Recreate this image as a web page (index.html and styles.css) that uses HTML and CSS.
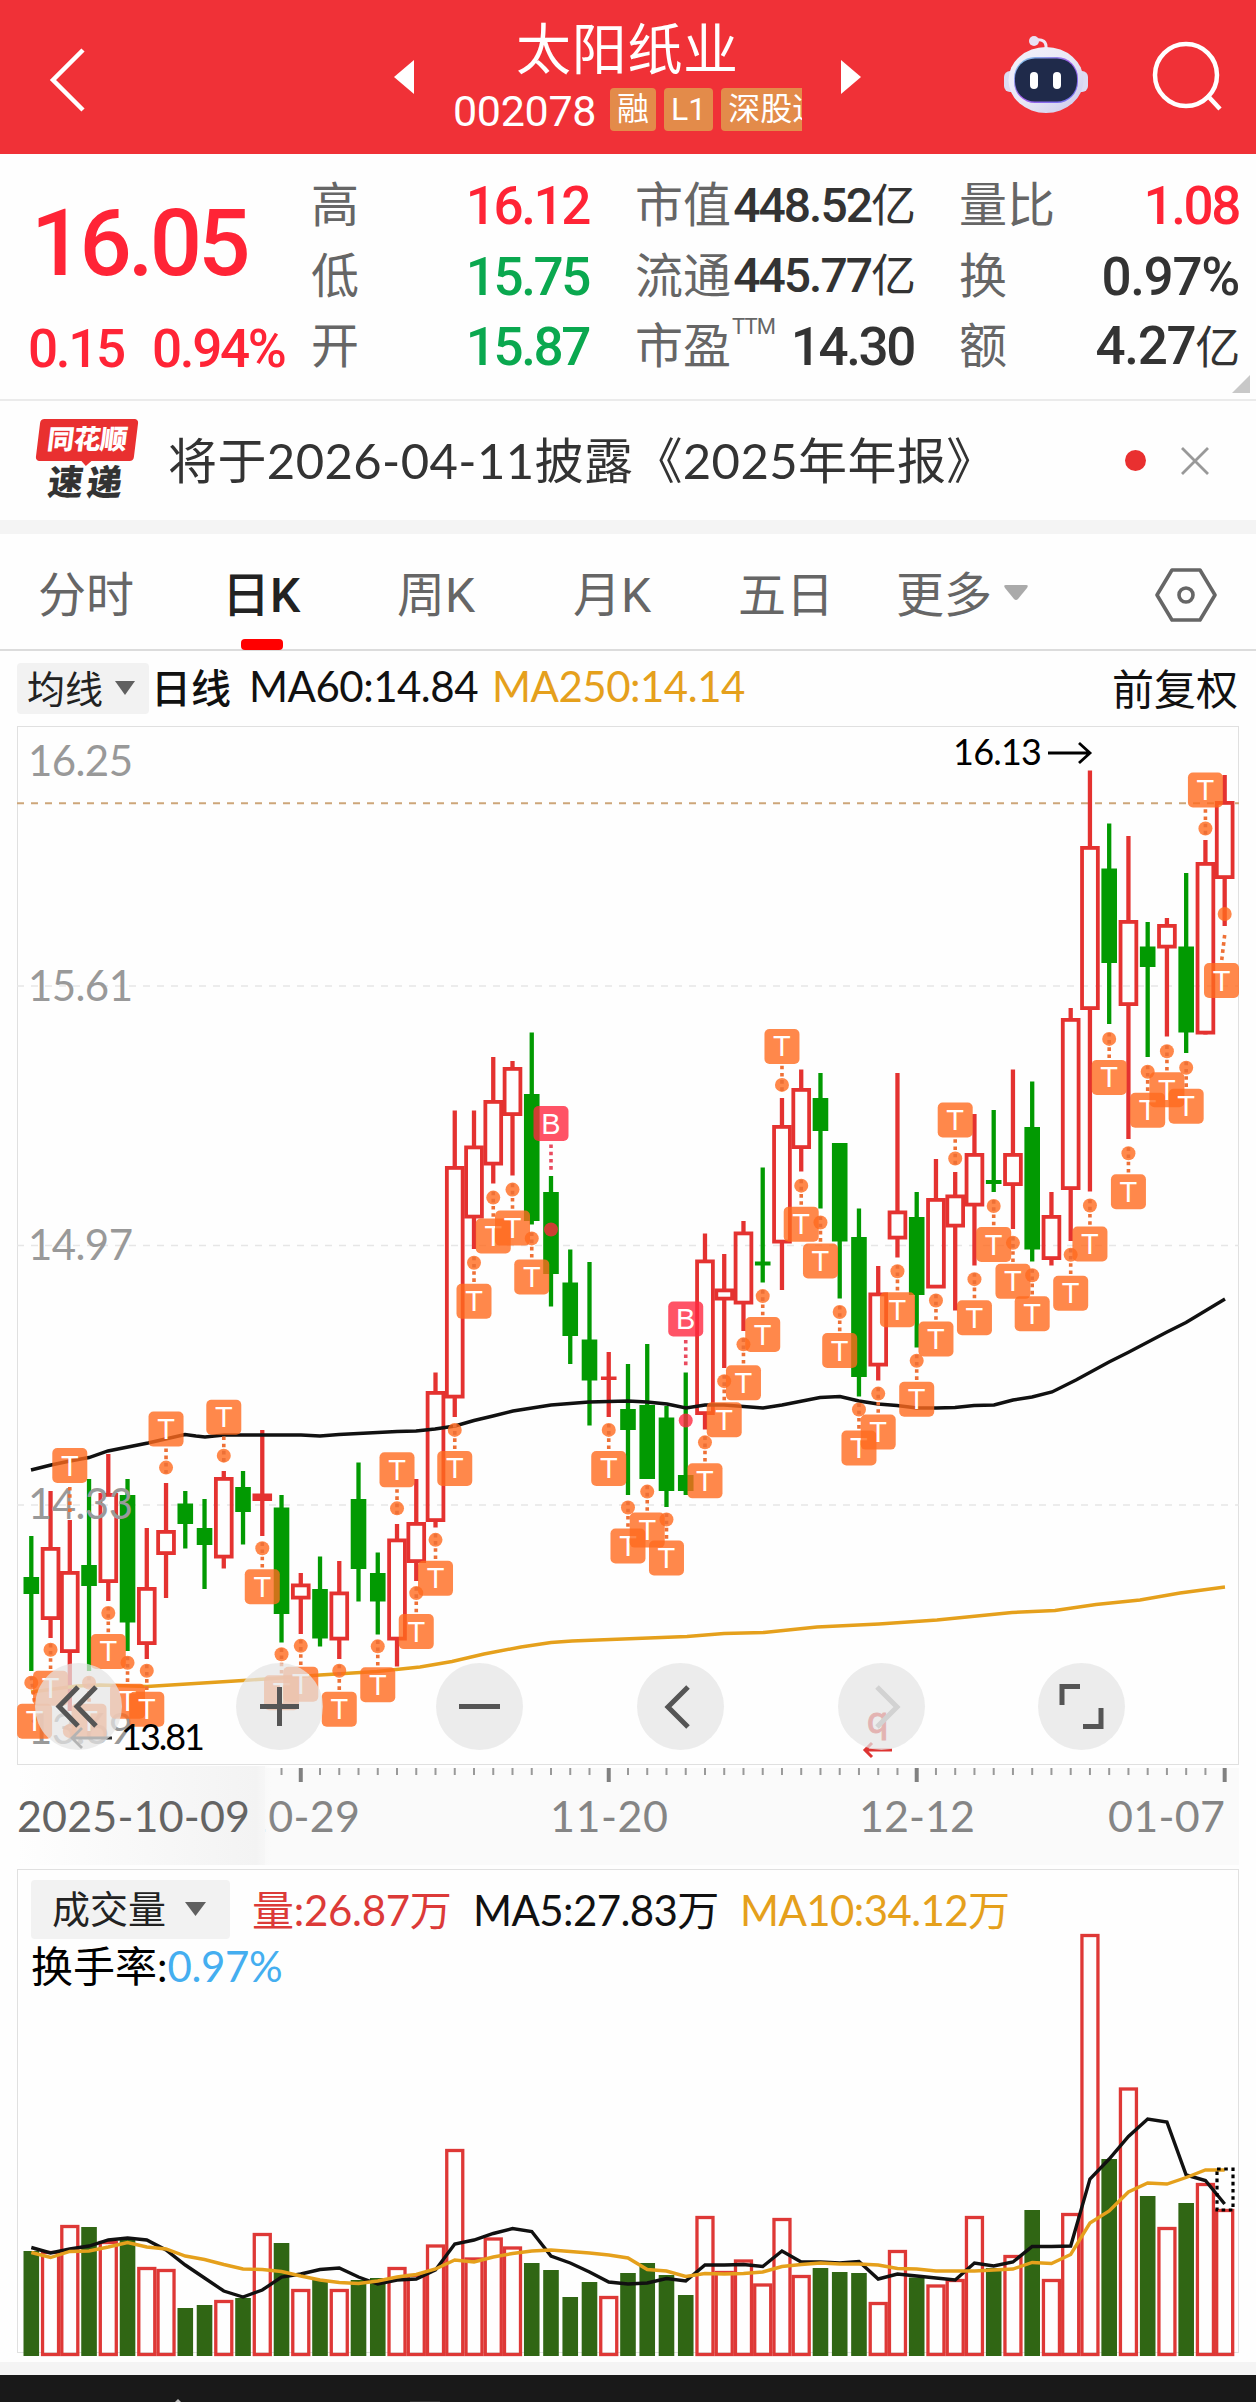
FILE: index.html
```html
<!DOCTYPE html>
<html lang="zh-CN">
<head>
    <meta charset="UTF-8">
    <meta name="viewport" content="width=device-width, initial-scale=1.0">
    <title>太阳纸业 002078</title>
    <link rel="stylesheet" href="styles.css">
</head>
<body>

    <header class="header">
        <svg class="back" width="40" height="68" viewBox="0 0 40 68"><path d="M35 4L5 34L35 64" fill="none" stroke="#fff" stroke-width="4.5"/></svg>
        <div class="stock">
            <svg width="20" height="34" viewBox="0 0 20 34"><path d="M20 0V34L0 17Z" fill="#fff"/></svg>
            <div class="stock-name">
                <h1>太阳纸业</h1>
                <div class="stock-code">
                    <span class="code">002078</span>
                    <span class="tag">融</span>
                    <span class="tag">L1</span>
                    <span class="tag tag-cut">深股通</span>
                </div>
            </div>
            <svg width="20" height="34" viewBox="0 0 20 34"><path d="M0 0V34L20 17Z" fill="#fff"/></svg>
        </div>
        <svg class="robot" width="86" height="80" viewBox="0 0 86 80">
            <defs>
                <linearGradient id="head" x1="0" y1="0" x2="1" y2="1">
                    <stop offset="0" stop-color="#f4f2fb"/>
                    <stop offset="0.5" stop-color="#e9e8f5"/>
                    <stop offset="1" stop-color="#c9c7ec"/>
                </linearGradient>
                <linearGradient id="rim" x1="0" y1="0" x2="1" y2="1">
                    <stop offset="0" stop-color="#7fd6ea"/>
                    <stop offset="0.5" stop-color="#a05be8"/>
                    <stop offset="1" stop-color="#6a78f0"/>
                </linearGradient>
            </defs>
            <path d="M32 5Q44 3 43 14" fill="none" stroke="#f0e8f4" stroke-width="3"/>
            <circle cx="31" cy="6" r="5" fill="#e9e1f4"/>
            <rect x="1" y="36" width="84" height="21" rx="6" fill="#dddbf2"/>
            <ellipse cx="43" cy="45" rx="37.500" ry="33" fill="url(#head)"/>
            <rect x="11" y="22" width="64" height="46" rx="21" fill="url(#rim)"/>
            <rect x="12" y="23.500" width="62" height="43" rx="20" fill="#1f2a4a"/>
            <rect x="27" y="37" width="8" height="17" rx="4" fill="#fff"/>
            <rect x="50" y="37" width="8" height="17" rx="4" fill="#fff"/>
        </svg>
        <svg class="search" width="72" height="72" viewBox="0 0 72 72"><circle cx="35" cy="35" r="31" fill="none" stroke="#fff" stroke-width="4.500"/><path d="M56 55L69 69" stroke="#fff" stroke-width="4.500"/></svg>
    </header>

    <section class="quote">
        <div class="price">
            <div class="price-now">16.05</div>
            <div class="price-change"><span>0.15</span><span>0.94%</span></div>
        </div>
        <dl class="col col-1">
            <dt>高</dt><dd class="up">16.12</dd>
            <dt>低</dt><dd class="down">15.75</dd>
            <dt>开</dt><dd class="down">15.87</dd>
        </dl>
        <dl class="col col-2">
            <dt>市值</dt><dd class="small">448.52<i>亿</i></dd>
            <dt>流通</dt><dd class="small">445.77<i>亿</i></dd>
            <dt>市盈<sup>TTM</sup></dt><dd>14.30</dd>
        </dl>
        <dl class="col col-3">
            <dt>量比</dt><dd class="up">1.08</dd>
            <dt>换</dt><dd class="wide">0.97%</dd>
            <dt>额</dt><dd class="wide">4.27<i>亿</i></dd>
        </dl>
        <svg class="corner" width="18" height="18" viewBox="0 0 18 18"><path d="M18 0V18H0Z" fill="#c8c8c8"/></svg>
    </section>

    <section class="notice">
        <div class="notice-logo">
            <span class="logo-top">同花顺</span>
            <span class="logo-bottom">速递</span>
        </div>
        <p>将于<em>2026-04-11</em>披露《<em>2025</em>年年报》</p>
        <span class="dot"></span>
        <svg width="28" height="28" viewBox="0 0 28 28"><path d="M1 1L27 27M27 1L1 27" stroke="#999" stroke-width="2.8"/></svg>
    </section>

    <nav class="tabs">
        <a class="t1">分时</a>
        <a class="t2 active">日K</a>
        <a class="t3">周K</a>
        <a class="t4">月K</a>
        <a class="t5">五日</a>
        <a class="t6">更多<svg width="24" height="16" viewBox="0 0 24 16"><path d="M2 0H22Q25 0 23 3L14 14Q12 16 10 14L1 3Q-1 0 2 0Z" fill="#aaa"/></svg></a>
        <svg class="setting" width="62" height="54" viewBox="0 0 62 54"><path d="M17 2H45L60 27L45 52H17L2 27Z" fill="none" stroke="#666" stroke-width="3.6" stroke-linejoin="round"/><circle cx="31" cy="27" r="7" fill="none" stroke="#666" stroke-width="3.6"/></svg>
    </nav>

    <div class="ma-bar">
        <button class="select">均线<svg width="20" height="14" viewBox="0 0 20 14"><path d="M0 0H20L10 14Z" fill="#606060"/></svg></button>
        <b>日线</b>
        <span class="ma60">MA60:14.84</span>
        <span class="ma250">MA250:14.14</span>
        <span class="adjust">前复权</span>
    </div>

    <section class="kline">
        <svg id="kline" width="1256" height="1044" viewBox="0 722 1256 1044"></svg>
        <div class="tools">
            <button><svg viewBox="0 0 87 87"><path d="M43 24L24 43.500L43 63M61 24L42 43.500L61 63"/></svg></button>
            <button><svg viewBox="0 0 87 87"><path d="M24 43.500H63M43.500 24V63"/></svg></button>
            <button><svg viewBox="0 0 87 87"><path d="M23 43.500H64"/></svg></button>
            <button><svg viewBox="0 0 87 87"><path d="M51 24L31 44L51 64"/></svg></button>
            <button class="off"><svg viewBox="0 0 87 87"><path d="M39 24L59 44L39 64"/></svg></button>
            <button><svg viewBox="0 0 87 87"><path d="M42 23.500H24V42M45 63.500H63V45"/></svg></button>
        </div>
    </section>

    <svg id="axis" class="axis" width="1256" height="103" viewBox="0 1766 1256 103"></svg>

    <section class="volume">
        <div class="volume-head">
            <button class="select">成交量<svg width="21" height="14" viewBox="0 0 21 14"><path d="M0 0H21L10.500 14Z" fill="#606060"/></svg></button>
            <span class="vol">量:26.87万</span>
            <span class="ma5">MA5:27.83万</span>
            <span class="ma10">MA10:34.12万</span>
        </div>
        <div class="turnover">换手率:<span>0.97%</span></div>
        <svg id="volume" width="1256" height="493" viewBox="0 1869 1256 493"></svg>
    </section>

    <footer class="bottom">
        <svg width="1256" height="27" viewBox="0 0 1256 27"><path d="M175 27L178 24L181 27Z" fill="#bbb"/><rect x="410" y="26" width="30" height="1" fill="#333"/></svg>
    </footer>

    <script src="chart.js"></script>
</body>
</html>
```
FILE: styles.css
```css
body {
    margin: 0;
    width: 1256px;
    height: 2402px;
    overflow: hidden;
    background-color: #fefefe;
    color: #333;
    font-family: Roboto, 'Noto Sans CJK SC', sans-serif;
}

h1, p, dl, dt, dd {
    margin: 0;
    font-weight: 400;
}

svg {
    display: block;
    flex-shrink: 0;
}

button {
    border: none;
    padding: 0;
    font-family: inherit;
}

/* header */
.header {
    display: flex;
    align-items: center;
    height: 154px;
    box-sizing: border-box;
    background-color: #f03137;
    color: #fff;
}

.back {
    margin-left: 48px;
    margin-top: 5px;
}

.stock {
    display: flex;
    align-items: center;
    margin-left: 306px;
    width: 467px;
}

.stock-name {
    width: 349px;
    margin: 0 39px;
    overflow: hidden;
}

.stock h1 {
    font-size: 55px;
    line-height: 64px;
    margin-top: 8px;
    padding-left: 63px;
    letter-spacing: 0.7px;
    white-space: nowrap;
}

.stock-code {
    display: flex;
    align-items: center;
    height: 56px;
    margin-bottom: 7px;
    gap: 8px;
    overflow: hidden;
}

.code {
    flex-shrink: 0;
    width: 149px;
    font-size: 43px;
    letter-spacing: -0.3px;
    margin-top: 2px;
}

.tag {
    flex-shrink: 0;
    box-sizing: border-box;
    height: 43px;
    padding: 0 7px;
    border-radius: 4px;
    background-color: #e38b4a;
    font-size: 32px;
    line-height: 42px;
}

.robot {
    margin-left: 142px;
    margin-top: -4px;
}

.search {
    margin-left: 62px;
    margin-top: -3px;
}

/* quote */
.quote {
    position: relative;
    display: flex;
    height: 247px;
    box-sizing: border-box;
    border-bottom: 2px solid #ebebeb;
}

.price {
    width: 311px;
    color: #ff2436;
    font-weight: 500;
}

.price-now {
    padding-left: 31px;
    margin-top: 32px;
    height: 127px;
    font-size: 92px;
    line-height: 116px;
    letter-spacing: -3.800px;
}

.price-change {
    display: flex;
    gap: 28px;
    padding-left: 28px;
    font-size: 53px;
    line-height: 72px;
    letter-spacing: -2.3px;
}

.col {
    display: grid;
    grid-template-columns: auto 1fr;
    grid-auto-rows: 70.500px;
    align-items: center;
    padding-top: 17px;
    white-space: nowrap;
}

.col-1 {
    width: 278px;
}

.col-2 {
    width: 279px;
    margin-left: 46px;
}

.col-3 {
    width: 280px;
    margin-left: 45px;
}

.col dt {
    position: relative;
    color: #666;
    font-size: 48px;
    line-height: 70px;
}

.col sup {
    position: absolute;
    left: 97px;
    top: -10px;
    font-size: 22px;
    line-height: 50px;
    letter-spacing: -0.8px;
}

.col dd {
    text-align: right;
    font-size: 53px;
    font-weight: 500;
    line-height: 74px;
    letter-spacing: -2.400px;
}

.col i {
    font-style: normal;
    font-weight: 400;
    font-size: 45px;
}

.col .small {
    font-size: 48px;
    letter-spacing: -2px;
}

.col .wide {
    letter-spacing: -1.300px;
}

.up {
    color: #ff2436;
}

.down {
    color: #0aa84f;
}

.corner {
    position: absolute;
    right: 6px;
    bottom: 6px;
}

/* notice */
.notice {
    display: flex;
    align-items: center;
    height: 119px;
    border-bottom: 14px solid #f4f4f4;
}

.notice-logo {
    display: flex;
    flex-direction: column;
    width: 98px;
    margin-left: 38px;
    text-align: center;
    font-weight: 900;
}

.logo-top {
    position: relative;
    height: 42px;
    border-radius: 4px;
    background-color: #e93030;
    color: #fff;
    font-size: 27px;
    line-height: 42px;
    letter-spacing: -0.5px;
    transform: skewX(-7deg);
}

.logo-top::after {
    content: '';
    position: absolute;
    left: 46px;
    bottom: -5px;
    border: 5px solid transparent;
    border-top-color: #e93030;
    border-bottom: none;
}

.logo-bottom {
    margin-top: 5px;
    height: 37px;
    font-size: 35px;
    line-height: 36px;
    letter-spacing: 4px;
    transform: skewX(-7deg);
}

.notice p {
    width: 957px;
    margin-left: 32px;
    margin-top: -7px;
    font-size: 49px;
    letter-spacing: 0.4px;
    white-space: nowrap;
}

.notice em {
    font-style: normal;
    font-family: Lato, sans-serif;
    font-size: 49px;
}

.dot {
    width: 21px;
    height: 21px;
    border-radius: 50%;
    background-color: #e93030;
    margin-right: 35px;
}

/* tabs */
.tabs {
    position: relative;
    display: flex;
    align-items: center;
    height: 115px;
    border-bottom: 2px solid #dcdcdc;
    color: #666;
    font-size: 48px;
}

.tabs a {
    position: relative;
    display: flex;
    align-items: center;
    height: 115px;
    margin-top: -2px;
    white-space: nowrap;
}

.t1 { width: 184px; margin-left: 38px; }
.t2 { width: 175px; }
.t3 { width: 176px; }
.t4 { width: 165px; }
.t5 { width: 158px; }
.t6 { width: 260px; }

.t6 svg {
    margin-left: 12px;
    margin-top: 5px;
}

.tabs .active {
    color: #222;
    font-weight: 500;
}

.active::after {
    content: '';
    position: absolute;
    left: 19px;
    bottom: -2px;
    width: 42px;
    height: 11px;
    border-radius: 4px;
    background-color: #f00;
}

.setting {
    margin-top: 6px;
    margin-left: -1px;
}

/* moving averages */
.ma-bar {
    display: flex;
    align-items: center;
    height: 71px;
    padding: 2px 18px 0 17px;
    margin-bottom: -2px;
    font-family: Lato, 'Noto Sans CJK SC', sans-serif;
    font-size: 42px;
    color: #111;
    white-space: nowrap;
}

.ma-bar b,
.ma-bar span {
    margin-top: -5px;
}

.select {
    display: flex;
    align-items: center;
    border-radius: 4px;
    background-color: #f2f2f2;
    color: #222;
    font-size: 38px;
}

.ma-bar .select {
    width: 132px;
    height: 51px;
    padding: 0 0 5px 10px;
    box-sizing: border-box;
    gap: 12px;
}

.select svg {
    margin-top: 4px;
}

.ma-bar b {
    width: 98px;
    margin-left: 2px;
    font-size: 40px;
    font-weight: 500;
}

.ma60 {
    width: 243px;
    letter-spacing: -0.5px;
}

.ma250,
.ma10 {
    color: #e5a01c;
}

.ma250 {
    letter-spacing: -0.5px;
}

.adjust {
    margin-left: auto;
}

/* k line */
.kline {
    position: relative;
    height: 1044px;
}

.tools {
    position: absolute;
    left: 35px;
    top: 941px;
    display: flex;
    gap: 113.700px;
}

.tools button {
    width: 87px;
    height: 87px;
    border-radius: 50%;
    background-color: rgba(228, 228, 228, 0.72);
}

.tools path {
    fill: none;
    stroke: #555;
    stroke-width: 5;
}

.tools .off path {
    stroke: #d2d2d2;
}

svg text {
    font-family: Lato, sans-serif;
}

.scale {
    font-size: 42px;
    fill: #999;
}

.date {
    font-size: 43px;
    fill: #858585;
}

.date-first {
    fill: #646464;
}

.limit {
    font-size: 36px;
    fill: #000;
}

.mark {
    font-size: 29px;
    fill: #fff;
    text-anchor: middle;
}

svg .mark {
    font-family: 'Liberation Sans', sans-serif;
}

/* volume */
.volume {
    position: relative;
    height: 493px;
    font-family: Lato, 'Noto Sans CJK SC', sans-serif;
    font-size: 42px;
    white-space: nowrap;
}

.volume-head {
    display: flex;
    align-items: center;
    height: 59px;
    padding: 11px 0 0 31px;
}

.volume-head span {
    margin-top: -5px;
}

.volume .select {
    width: 199px;
    height: 59px;
    padding: 0 0 6px 21px;
    box-sizing: border-box;
    gap: 19px;
}

.vol {
    width: 221px;
    margin-left: 22px;
    color: #dc3a38;
    letter-spacing: -0.3px;
}

.ma5 {
    width: 267px;
    color: #111;
    letter-spacing: -0.6px;
}

.ma10 {
    letter-spacing: -0.6px;
}

.turnover {
    height: 52px;
    padding-left: 31px;
    line-height: 54px;
    color: #000;
}

.turnover span {
    color: #44aef0;
    letter-spacing: -0.4px;
}

.volume > svg {
    position: absolute;
    left: 0;
    top: 0;
}

.bottom {
    height: 27px;
    border-top: 13px solid #f4f4f4;
    background-color: #191919;
}
```
FILE: chart.js
```js
const RED = '#e43230';
const GREEN = '#029a02';
const ORANGE = '#ff6a1e';
const STEP = 19.248;
const LEFT = 31.3;

// colour, high, low, body top, body bottom
const candles = [
    ['g', 1536, 1671, 1577, 1594], ['r', 1491, 1638, 1547, 1620], ['r', 1520, 1711, 1571, 1653],
    ['g', 1479, 1671, 1565, 1586], ['r', 1454, 1601, 1493, 1583], ['g', 1479, 1651, 1495, 1622.5],
    ['r', 1528, 1659, 1587, 1645], ['r', 1483, 1598, 1530, 1555], ['g', 1491, 1548.5, 1503.5, 1524],
    ['g', 1499, 1589, 1528, 1545], ['r', 1471, 1568.5, 1477, 1558.5], ['g', 1471, 1544.5, 1487, 1512],
    ['r', 1430, 1536, 1493.5, 1501], ['g', 1495, 1642.5, 1507.5, 1614], ['r', 1573, 1634, 1583.5, 1599.5],
    ['g', 1556.5, 1646.5, 1589, 1638.5], ['r', 1561, 1659, 1591.5, 1640.5], ['g', 1462.5, 1601.5, 1499, 1569],
    ['g', 1552.5, 1634.5, 1573, 1601.5], ['r', 1524, 1666.5, 1538.5, 1640.5], ['r', 1479, 1581, 1522, 1563],
    ['r', 1372.5, 1527.5, 1391, 1522], ['r', 1110.5, 1417, 1166, 1398.5], ['r', 1110.5, 1249, 1145.5, 1218.5],
    ['r', 1057, 1183.5, 1100, 1165.5], ['r', 1061, 1175.5, 1067, 1116], ['g', 1032.5, 1224.5, 1094, 1221],
    ['g', 1176, 1306.5, 1192, 1274], ['g', 1249.5, 1364, 1282.5, 1336], ['g', 1262, 1425.5, 1339.5, 1380.5],
    ['r', 1352, 1417, 1376.5, 1380], ['g', 1364, 1495, 1409, 1430], ['g', 1344, 1479, 1405, 1479],
    ['g', 1406, 1507, 1417.5, 1491], ['g', 1372.5, 1495, 1475, 1491], ['r', 1233.5, 1429.5, 1259.5, 1415],
    ['r', 1254, 1368, 1288.5, 1300.5], ['r', 1221, 1331, 1231.5, 1304.5], ['g', 1167.5, 1282.5, 1261.5, 1265.5],
    ['r', 1098, 1290, 1125, 1243.5], ['r', 1069.5, 1171.5, 1088, 1149], ['g', 1073, 1208.5, 1098, 1131],
    ['g', 1143, 1298.5, 1143, 1241.5], ['g', 1208.5, 1396.5, 1237, 1377], ['r', 1266, 1380.5, 1292.5, 1366.5],
    ['r', 1073, 1257.5, 1210.5, 1239.5], ['g', 1192, 1347.5, 1217, 1295], ['r', 1159, 1287, 1198, 1288.5],
    ['r', 1172, 1310.5, 1194.5, 1227.5], ['r', 1114, 1265.5, 1153, 1206.5], ['g', 1110, 1192, 1180, 1184],
    ['r', 1069.5, 1229, 1153, 1186], ['g', 1081.5, 1261.5, 1127, 1249.5], ['r', 1192, 1265.5, 1215, 1260],
    ['r', 1008, 1241, 1018, 1190], ['r', 770.5, 1191.5, 846, 1010], ['g', 823.5, 1024, 868.5, 963],
    ['r', 836, 1139, 920, 1006], ['g', 922, 1057, 946.5, 967], ['r', 918, 1036.5, 924, 948.5],
    ['g', 873, 1053, 946.5, 1032.5], ['r', 840, 1034.5, 862, 1034.5], ['r', 775, 926, 801, 879]
];

const marksBelow = [0, 1, 3, 4, 5, 6, 12, 13, 14, 16, 18, 20, 21, 22, 23, 24, 25, 26, 30, 31, 32, 33,
    35, 36, 37, 38, 40, 41, 42, 43, 44, 45, 46, 47, 49, 50, 51, 52, 54, 55, 56, 57, 58, 59, 60];
const marksAbove = [7, 10, 19, 39, 48, 61];

const ma60 = '31,1470 51,1465 70,1461 89,1457.5 108,1451 148,1443 185,1434.5 196,1436 205,1437 224,1435 301,1435 320,1436 339,1434.5 397,1431.5 416,1431 435,1429 455,1426 474,1420.5 493,1416 513,1411 551,1405 589,1402 628,1401 647,1402 667,1404 686,1408 705,1405 724,1405 763,1408 782,1405 820,1397.5 840,1396.500 859,1401 878,1404 897,1405.5 917,1408 936,1408 955,1407.5 974,1405.5 994,1405 1013,1400 1032,1397 1052,1392 1076,1380 1109,1362 1128,1352.5 1167,1332 1186,1322.5 1225,1299';
const ma250 = '31,1692 77,1686 100,1685 147,1686.5 187,1684 243,1680.5 280,1678 320,1675 377,1671.5 420,1667 452,1661.5 484,1654 521,1647 551,1642.5 572,1641 687,1636.5 724,1633.5 764,1632.5 817,1627 879,1624 937,1620 1012,1612.5 1055,1610.5 1096,1604.500 1140,1600 1180,1593 1225,1587';

const volumes = [
    ['g', 2251], ['r', 2251], ['r', 2225], ['g', 2227], ['r', 2241], ['g', 2239], ['r', 2267], ['r', 2269],
    ['g', 2308], ['g', 2305], ['r', 2300], ['g', 2298], ['r', 2233], ['g', 2243], ['r', 2289], ['g', 2280],
    ['r', 2289], ['g', 2280], ['g', 2278], ['r', 2267], ['r', 2274], ['r', 2244.5], ['r', 2149], ['r', 2257.5],
    ['r', 2237.5], ['r', 2246.5], ['g', 2263], ['g', 2270], ['g', 2297], ['g', 2282], ['r', 2296], ['g', 2273],
    ['g', 2263], ['g', 2275], ['g', 2295], ['r', 2216], ['r', 2271], ['r', 2259.5], ['r', 2283.5], ['r', 2218],
    ['r', 2275], ['g', 2268], ['g', 2272], ['g', 2273], ['r', 2302], ['r', 2250], ['g', 2277.5], ['r', 2284.5],
    ['r', 2279], ['r', 2216], ['g', 2268], ['r', 2255], ['g', 2210], ['r', 2279], ['r', 2213], ['r', 1934],
    ['g', 2159], ['r', 2087.5], ['g', 2196], ['r', 2227], ['g', 2203], ['r', 2183], ['r', 2209]
];
const vol5 = [2247.5, 2253, 2249, 2246, 2240, 2238, 2240, 2250, 2265, 2278, 2291, 2297, 2290, 2277, 2274, 2269.5,
    2268, 2277, 2284, 2280, 2279, 2270, 2244, 2240, 2233.5, 2228.5, 2231.5, 2256, 2263, 2272, 2282, 2284, 2283,
    2278.5, 2281, 2265, 2265, 2264.5, 2266.5, 2251, 2262, 2262, 2263, 2261.5, 2279, 2274, 2276, 2278, 2280, 2263,
    2266, 2262, 2246.5, 2246.5, 2246, 2179, 2159, 2136.5, 2119, 2122, 2175, 2180.5, 2204];
const vol10 = [2252.5, 2257.5, 2251.5, 2251, 2247, 2242.5, 2247, 2249, 2256, 2259.5, 2264.5, 2269, 2269.5, 2271.5,
    2276, 2280, 2282.5, 2283.5, 2281, 2277, 2274.5, 2269, 2260, 2262, 2257, 2253.5, 2251, 2250, 2251.5, 2253,
    2255, 2258, 2269.5, 2271, 2276.5, 2273.5, 2274, 2273.5, 2272, 2266.5, 2264.5, 2263, 2264, 2264, 2265, 2268.5,
    2269, 2271, 2271, 2271, 2270, 2269, 2262.5, 2263.5, 2254.5, 2223, 2211, 2192, 2183, 2184, 2177.5, 2170, 2170];

const px = i => LEFT + i * STEP;

function rect(x, y, w, h, attrs) {
    return `<rect x="${x}" y="${y}" width="${w}" height="${h}" ${attrs}/>`;
}

function line(x1, y1, x2, y2, color, width, dash) {
    return `<line x1="${x1}" y1="${y1}" x2="${x2}" y2="${y2}" stroke="${color}" stroke-width="${width}" stroke-dasharray="${dash || 'none'}"/>`;
}

function poly(points, color) {
    return `<polyline points="${points}" fill="none" stroke="${color}" stroke-width="3.4"/>`;
}

function candle([color, high, low, top, bottom], i) {
    const x = px(i);
    if (color === 'g') {
        return line(x, high, x, low, GREEN, 4.3) + rect(x - 7.8, top, 15.6, bottom - top, `fill="${GREEN}"`);
    }
    let s = line(x, high, x, top + 1, RED, 4.3) + line(x, bottom - 1, x, low, RED, 4.3);
    if (bottom - top < 9) {
        const half = bottom - top < 5 ? 7.8 : 9.8;
        return s + rect(x - half, top, half * 2, bottom - top, `fill="${RED}"`);
    }
    return s + rect(x - 7.9, top + 1.9, 15.8, bottom - top - 3.8, `fill="none" stroke="${RED}" stroke-width="3.8"`);
}

function badge(x, y, letter, color) {
    return rect(x - 17.5, y - 17.5, 35, 35, `rx="5" fill="${color}" fill-opacity="0.8"`) +
        `<text class="mark" x="${x}" y="${y + 10}">${letter}</text>`;
}

function dot(x, y, color) {
    return `<circle cx="${x}" cy="${y}" r="7" fill="${color}" fill-opacity="0.8"/>`;
}

function stem(x1, y1, x2, y2, color) {
    return line(x1, y1, x2, y2, color || '#ee7036', 3.6, '3.6 3.6');
}

function mark(i, dir) {
    const x = px(i);
    const [, high, low] = candles[i];
    const y = dir > 0 ? low + 12 + (1600 - low) * 0.005 : high - 15.5 + (1500 - high) * 0.006;
    const bx = Math.max(x, 34.6);
    return dot(x, y, ORANGE) + stem(x, y - dir * 6, bx, y + dir * 20) + badge(bx, y + dir * 38.5, 'T', ORANGE);
}

function drawKline() {
    let s = rect(17.5, 726.5, 1221, 1038, 'fill="#fefefe" stroke="#e0e0e0"');
    [986, 1245.5, 1505].forEach(y => s += line(17, y, 1239, y, '#e6e6e6', 1.6, '7 7'));
    s += line(17, 803.3, 1239, 803.3, '#cda67a', 2, '7 7');
    s += candles.map(candle).join('');
    s += poly(ma250, '#e5a01c') + poly(ma60, '#111');
    [['16.25', 776], ['15.61', 1001], ['14.97', 1260], ['14.33', 1519], ['13.69', 1744]].forEach(([t, y]) => {
        s += `<text class="scale" x="28" y="${y}" textLength="105">${t}</text>`;
    });
    s += marksAbove.map(i => mark(i, -1)).join('');
    s += marksBelow.map(i => mark(i, 1)).join('');

    // lowest bar and the latest bar have their own placement
    s += stem(px(2), 1487, px(2), 1512) + badge(px(2), 1465.5, 'T', ORANGE) + dot(px(2), 1731, ORANGE);
    s += dot(px(62), 914, ORANGE) + stem(px(62), 935, 1221.5, 962) + badge(1221.5, 980.5, 'T', ORANGE);
    [[27, 1123.5, 1229.5], [34, 1319, 1420.5]].forEach(([i, y, d]) => {
        s += stem(px(i), y + 21, px(i), y + 47, '#e94a5e') + dot(px(i), d, '#ff2840') + badge(px(i), y, 'B', '#ff2840');
    });

    s += '<text class="limit" x="953" y="764.5" textLength="89">16.13</text><path d="M1048 753H1090M1079 743L1090 753L1079 763" fill="none" stroke="#000" stroke-width="2.8"/>';
    s += '<text class="limit" x="121" y="1750" textLength="84">13.81</text><path d="M112 1738H72M82 1728L72 1738L82 1748" fill="none" stroke="#333" stroke-width="2.8"/>';
    s += '<text x="867" y="1733" font-size="38" fill="#dd3331" stroke="#dd3331">q</text><path d="M892 1750H865M872 1743L865 1750L872 1757" fill="none" stroke="#dd3331" stroke-width="3"/>';
    document.getElementById('kline').innerHTML = s;
}

function drawAxis() {
    let s = '<defs><linearGradient id="fade"><stop offset="0" stop-color="#fefefe"/><stop offset="0.94" stop-color="#f3f3f3"/><stop offset="1" stop-color="#fafafa" stop-opacity="0"/></linearGradient></defs>';
    s += rect(17, 1768, 1222, 97, 'fill="#fafafa"');
    for (let i = 0; i < 63; i++) {
        const major = i % 16 === 14;
        s += line(px(i), 1768, px(i), major ? 1782 : 1775, major ? '#808080' : '#999', major ? 4 : 2);
    }
    s += '<text class="date" x="243" y="1831.5" textLength="117">10-29</text>';
    s += '<text class="date" x="550" y="1831.5" textLength="118">11-20</text>';
    s += '<text class="date" x="859" y="1831.5" textLength="116">12-12</text>';
    s += '<text class="date" x="1108" y="1831.5" textLength="117">01-07</text>';
    s += rect(17, 1766, 248, 99, 'fill="#f6f6f6"') + rect(17, 1766, 255, 99, 'fill="url(#fade)"');
    s += '<text class="date date-first" x="17" y="1831.5" textLength="233">2025-10-09</text>';
    document.getElementById('axis').innerHTML = s;
}

function drawVolume() {
    let s = rect(17.5, 1869.5, 1221, 483, 'fill="none" stroke="#e0e0e0"');
    volumes.forEach(([color, top], i) => {
        const x = px(i);
        if (color === 'g') {
            s += rect(x - 7.8, top, 15.6, 2356 - top, 'fill="#306614"');
        } else {
            s += rect(x - 8, top + 1.5, 16, 2353 - top, 'fill="none" stroke="#de3836" stroke-width="3.3"');
        }
    });
    s += poly(vol5.map((y, i) => px(i) + ',' + y).join(' '), '#111');
    s += poly(vol10.map((y, i) => px(i) + ',' + y).join(' '), '#e5a01c');
    s += rect(1217, 2169, 16, 41, 'fill="none" stroke="#000" stroke-width="3.2" stroke-dasharray="3.6 3.6"');
    document.getElementById('volume').innerHTML = s;
}

drawKline();
drawAxis();
drawVolume();
```
